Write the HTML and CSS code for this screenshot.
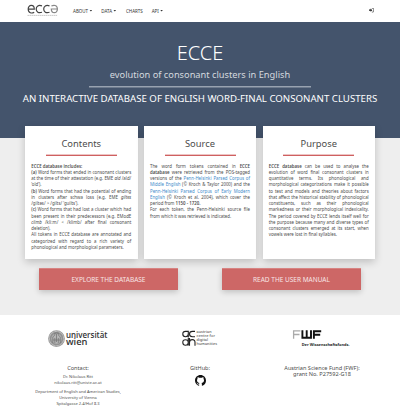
FILE: index.html
```html
<!DOCTYPE html>
<html lang="en">
<head>
<meta charset="utf-8">
<title>ECCE</title>
<link rel="stylesheet" href="styles.css">
</head>
<body>
<nav class="nav">
  <svg class="brand" viewBox="0 0 34 14" width="34" height="14">
    <g fill="none" stroke="#444" stroke-width="1.2">
      <path d="M1.5 5.2H7.300C7.300 .2 1.200.2 1.200 5 1.200 9.500 5 9.500 7.200 8.200"/>
      <path d="M15 1.900C11.500.7 9.200 2.100 9.200 5S11.500 9.400 15 8.300"/>
      <path d="M22.500 1.900C19 .7 16.700 2.100 16.700 5S19 9.400 22.500 8.300"/>
      <path stroke="#888" d="M30.100 5H24.300C24.300 9.900 30.400 9.900 30.400 5.100 30.400 .8 26.600.8 24.400 2"/>
    </g>
    <path d="M.5 11.400H30.500" stroke="#bbb" stroke-width=".8" stroke-dasharray="1.6 .4"/>
  </svg>
  <ul class="menu">
    <li class="m1">ABOUT<i class="caret"></i></li>
    <li class="m2">DATA<i class="caret"></i></li>
    <li class="m3">CHARTS</li>
    <li class="m4">API<i class="caret"></i></li>
  </ul>
  <svg class="login" viewBox="0 0 16 14" width="5" height="4.4"><path d="M0 5h5V1.8L10.5 7 5 12.200V9H0z" fill="#222"/><path d="M9 1h3.500Q15 1 15 3.500v7Q15 13 12.500 13H9" fill="none" stroke="#222" stroke-width="1.900"/></svg>
</nav>
<header class="hero">
  <h1>ECCE</h1>
  <p class="sub">evolution of consonant clusters in English</p>
  <hr>
  <p class="lead">AN INTERACTIVE DATABASE OF ENGLISH WORD-FINAL CONSONANT CLUSTERS</p>
</header>
<main class="main">
  <div class="cards">
    <section class="card">
      <h2>Contents</h2>
      <div class="text">
        <p class="end"><b>ECCE database includes:</b></p>
        <p><b>(a)</b> Word forms that ended in consonant clusters</p>
        <p>at the time of their attestation (e.g. EME <em>ald</em> /ald/</p>
        <p class="end">‘old’).</p>
        <p><b>(b)</b> Word forms that had the potential of ending</p>
        <p>in clusters after schwa loss (e.g. EME <em>giltes</em></p>
        <p class="end">/giltəs/ &gt; /gilts/ ‘guilts’).</p>
        <p><b>(c)</b> Word forms that had lost a cluster which had</p>
        <p>been present in their predecessors (e.g. EModE</p>
        <p><em>climb</em> /kliːm/ &lt; /klimb/ after final consonant</p>
        <p class="end">deletion).</p>
        <p>All tokens in ECCE database are annotated and</p>
        <p>categorized with regard to a rich variety of</p>
        <p class="end">phonological and morphological parameters.</p>
      </div>
    </section>
    <section class="card">
      <h2>Source</h2>
      <div class="text">
        <p>The word form tokens contained in <b>ECCE</b></p>
        <p><b>database</b> were retrieved from the POS-tagged</p>
        <p>versions of the <a>Penn-Helsinki Parsed Corpus of</a></p>
        <p><a>Middle English</a> (© Kroch &amp; Taylor 2000) and the</p>
        <p><a>Penn-Helsinki Parsed Corpus of Early Modern</a></p>
        <p><a>English</a> (© Kroch et al. 2004), which cover the</p>
        <p class="end">period from <b>1150 - 1720.</b></p>
        <p>For each token, the Penn-Helsinki source file</p>
        <p class="end">from which it was retrieved is indicated.</p>
      </div>
    </section>
    <section class="card">
      <h2>Purpose</h2>
      <div class="text">
        <p><b>ECCE database</b> can be used to analyse the</p>
        <p>evolution of word final consonant clusters in</p>
        <p>quantitative terms. Its phonological and</p>
        <p>morphological categorizations make it possible</p>
        <p>to test and models and theories about factors</p>
        <p>that affect the historical stability of phonological</p>
        <p>constituents, such as their phonological</p>
        <p>markedness or their morphological indexicality.</p>
        <p>The period covered by ECCE lends itself well for</p>
        <p>the purpose because many and diverse types of</p>
        <p>consonant clusters emerged at its start, when</p>
        <p class="end">vowels were lost in final syllables.</p>
      </div>
    </section>
  </div>
  <div class="actions">
    <a class="btn">EXPLORE THE DATABASE</a>
    <a class="btn">READ THE USER MANUAL</a>
  </div>
</main>
<footer class="footer">
  <div class="col c1">
    <svg class="logo" width="62" height="18" viewBox="0 0 62 18">
      <circle cx="9.500" cy="8.600" r="8.400" fill="#999"/>
      <circle cx="9.500" cy="8.600" r="7.200" fill="none" stroke="#ddd" stroke-width="1" stroke-dasharray=".7 .7"/>
      <circle cx="9.500" cy="8.600" r="5.600" fill="#b5b5b5" stroke="#777" stroke-width=".5"/>
      <path d="M5.800 13V7l2-2v-2h3.500v2l2 2v6M7.800 13V8M11.300 13V8M9.500 4v8M5.800 10h7.500" fill="none" stroke="#777" stroke-width=".8"/>
      <text class="uni" x="19" y="7.800" textLength="41.500" lengthAdjust="spacingAndGlyphs">universität</text>
      <text class="uni" x="19" y="14.600" textLength="21.500" lengthAdjust="spacingAndGlyphs">wien</text>
    </svg>
    <h3>Contact:</h3>
    <address>Dr. Nikolaus Ritt<br>nikolaus.ritt@univie.ac.at<span class="dept">Department of English and American Studies,<br>University of Vienna<br>Spitalgasse 2-4/Hof 8.3</span></address>
  </div>
  <div class="col c2">
    <svg class="logo" width="36" height="18" viewBox="0 0 36 18">
      <g fill="none" stroke="#222" stroke-width="1.100">
        <path d="M6.300 1.400H3.500Q.8 1.400.8 4T3.500 6.700Q6.300 6.700 6.300 4M6.300.8V7.500M13 1.400H10.500Q7.500 1.400 7.500 4T10.500 6.700H13"/>
        <path d="M6.300 8V15.500M6.300 12.500Q6.300 9.800 3.500 9.800T.8 12.500 3.500 15.200 6.300 12.500M7.500 8V15.800M7.500 12.500Q7.500 9.600 10.300 9.600T13 12.500V15.800"/>
      </g>
      <g class="acdh"><text x="14.500" y="3.400" textLength="15">austrian</text><text x="14.500" y="7.400" textLength="18.500">centre for</text><text x="14.500" y="11.400" textLength="11.500">digital</text><text x="14.500" y="15.400" textLength="20.500">humanities</text></g>
    </svg>
    <h3>GitHub:</h3>
    <svg class="github" width="11" height="11" viewBox="0 0 16 16"><path fill="#111" d="M8 0C3.580 0 0 3.580 0 8c0 3.540 2.290 6.530 5.470 7.590.4.070.55-.17.55-.38 0-.19-.01-.82-.01-1.490-2.010.37-2.530-.49-2.690-.94-.09-.23-.48-.94-.82-1.130-.28-.15-.68-.52-.01-.53.63-.01 1.080.58 1.230.82.720 1.210 1.870.87 2.330.66.070-.52.28-.87.510-1.070-1.780-.2-3.640-.89-3.640-3.950 0-.87.310-1.590.82-2.150-.08-.2-.36-1.020.08-2.120 0 0 .67-.21 2.200.82a7.600 7.600 0 0 1 4 0c1.530-1.040 2.200-.82 2.200-.82.440 1.100.16 1.920.08 2.120.51.560.82 1.270.82 2.150 0 3.070-1.870 3.750-3.650 3.950.29.250.54.730.54 1.480 0 1.070-.01 1.930-.01 2.200 0 .21.150.46.550.38A8.010 8.010 0 0 0 16 8c0-4.420-3.580-8-8-8z"/></svg>
  </div>
  <div class="col c3">
    <svg class="logo" width="60" height="18" viewBox="0 0 60 18">
      <g fill="none" stroke-width="1.900"><path stroke="#aaa" stroke-width="1.300" d="M1.600 8.700V.9H8.400M1.600 4.500H7.500"/><path stroke="#111" d="M10.400.3V7.700H19V.3M14.700.3V7.700M21.900 8.700V1.200H29.200M21.900 4.800H28.200"/></g>
      <text class="fwf" x="9.700" y="16" textLength="48" lengthAdjust="spacingAndGlyphs">Der Wissenschaftsfonds.</text>
    </svg>
    <h3>Austrian Science Fund (FWF):<br>grant No. P27592-G18</h3>
  </div>
</footer>
</body>
</html>
```
FILE: styles.css
```css
* { box-sizing: border-box; }
body { margin: 0; width: 400px; height: 406px; overflow: hidden; background: #fff; color: #4c4c4c; font-family: "Noto Sans", "Open Sans", sans-serif; font-size: 4.375px; line-height: 6.25px; }
h1, h2, h3, p, ul { margin: 0; padding: 0; font-weight: 400; }
.nav { height: 21.500px; display: flex; align-items: flex-start; padding-left: 27px; }
.brand { margin-top: 4px; width: 34px; flex: none; }
.menu { display: flex; list-style: none; margin: 7.500px 0 0 12px; font-size: 4.500px; color: #333; }
.menu li { display: flex; align-items: center; }
.m1 { width: 28.200px; }
.m2 { width: 24.800px; }
.m3 { width: 25.700px; }
.caret { width: 3px; height: 1.800px; background: #333; clip-path: polygon(0 0, 100% 0, 50% 100%); margin-left: 1.300px; }
.login { margin: 8.400px 26px 0 auto; }
.hero { height: 116.500px; background: #44546c; color: #fff; text-align: center; padding-top: 19.500px; }
.hero h1 { font-size: 20px; line-height: 24px; font-weight: 300; }
.sub { font-size: 9.250px; line-height: 12px; margin-top: 4px; color: #d5d9df; }
.hero hr { width: 222px; height: 1px; background: #98a2b0; border: 0; margin: 5px auto 0; box-shadow: 0 1px #6d7a8d; }
.lead { font-size: 9.660px; line-height: 13px; margin-top: 5px; white-space: nowrap; }
.main { display: flow-root; height: 177px; background: #eee; padding: 0 25px; }
.cards { display: flex; justify-content: space-between; position: relative; margin-top: -12px; }
.card { width: 112.500px; height: 133px; background: #fff; padding: 10px 6.250px 0; box-shadow: 0 3px 8px rgba(0,0,0,.2); }
.card h2 { font-size: 9.375px; line-height: 16px; text-align: center; }
.card h2::after { content: ""; display: block; width: 71px; height: 1px; margin: 3px auto 0; background: #cf6060; box-shadow: 0 -1px #edc4c4; }
.text { margin-top: 6.500px; }
.text p { white-space: nowrap; text-align: justify; text-align-last: justify; height: 6.250px; }
.text .end { text-align-last: left; }
.text a { color: #428bca; }
b { font-weight: 600; }
.actions { display: flex; justify-content: space-between; padding: 9px 14px 0; }
.btn { width: 139px; height: 22px; line-height: 21.500px; text-align: center; background: #cd6766; color: #f8e5e5; border-top: 1px solid #d98584; font-size: 6.500px; box-shadow: 0 2px 6px rgba(0,0,0,.2); }
.footer { display: flex; padding: 14.500px 17px 0; text-align: center; }
.col { width: 122px; display: flex; flex-direction: column; align-items: center; }
.logo { height: 18px; flex: none; overflow: visible; }
.col h3 { font-size: 5.600px; line-height: 6.250px; margin-top: 17px; white-space: nowrap; }
address { font-style: normal; line-height: 5.900px; margin-top: 3.200px; white-space: nowrap; font-size: 4.030px; }
.dept { display: block; margin-top: 3.300px; }
.github { margin-top: 4px; }
.uni { font-family: "Open Sans", sans-serif; font-size: 8.600px; font-weight: 600; fill: #333; }
.acdh { font-size: 3.800px; fill: #333; }
.fwf { font-size: 4.200px; font-weight: 700; fill: #222; }
```
